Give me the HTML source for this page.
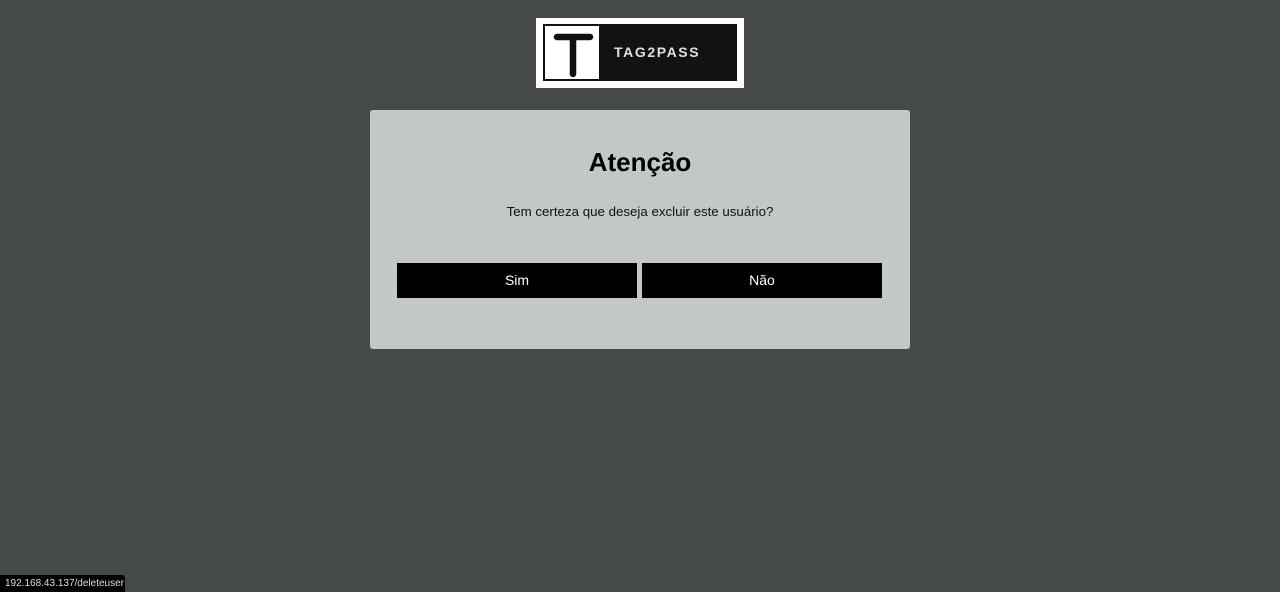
<!DOCTYPE html>
<html><head><meta charset="utf-8"><style>
body{margin:0;width:1280px;height:592px;background:#454a48;font-family:"Liberation Sans",sans-serif;position:relative;overflow:hidden}
.logo{position:absolute;left:536px;top:18px;width:208px;height:70px;background:#fff}
.frame{position:absolute;left:7px;top:6px;width:194px;height:57px;background:#121212}
.sq{position:absolute;left:2px;top:2px;width:54px;height:53px;background:#fff}
.tt{position:absolute;left:71px;top:0;line-height:57px;color:#e0e0e0;font-size:14px;font-weight:bold;letter-spacing:1.6px}
.card{position:absolute;left:370px;top:110px;width:540px;height:239px;background:#c2c7c7;border-radius:3px}
h1{position:absolute;left:0;width:100%;top:37px;margin:0;text-align:center;font-size:26px;font-weight:bold;color:#000}
p{position:absolute;left:0;width:100%;top:94px;margin:0;text-align:center;font-size:13.3px;color:#111}
.b{position:absolute;top:153px;width:240px;height:35px;background:#000;color:#fff;font-size:14px;text-align:center;line-height:35px}
.st{position:absolute;left:0;top:575px;height:17px;width:115px;padding:0 5px;background:#000;color:#ddd;font-size:10px;line-height:17px;border-top-right-radius:3px;white-space:nowrap}
</style></head><body>
<div class="logo"><div class="frame"><div class="sq"><svg width="54" height="53"><path d="M12 11H45M28 11V48" stroke="#111" stroke-width="6.5" stroke-linecap="round" fill="none"/></svg></div><div class="tt">TAG2PASS</div></div></div>
<div class="card"><h1>Atenção</h1><p>Tem certeza que deseja excluir este usuário?</p>
<div class="b" style="left:27px">Sim</div><div class="b" style="left:272px">Não</div></div>
<div class="st">192.168.43.137/deleteuser</div>
</body></html>
